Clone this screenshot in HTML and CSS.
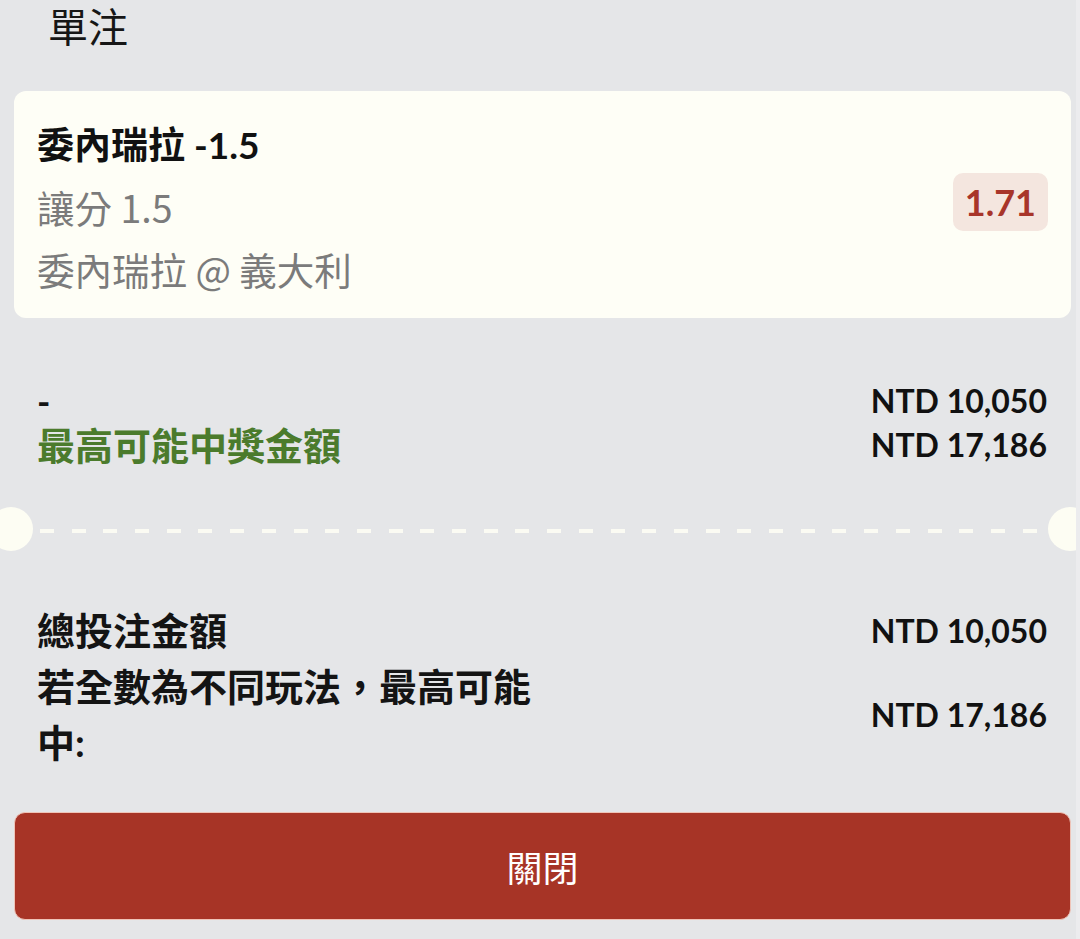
FILE: index.html
```html
<!DOCTYPE html>
<html lang="zh-Hant">
<head>
<meta charset="utf-8">
<title>單注</title>
<link rel="stylesheet" href="styles.css">
</head>
<body>
	<div class="screen">
		<main class="sheet">
			<h1 class="title">單注</h1>

			<section class="bet-card">
				<div class="bet-info">
					<div class="bet-pick">委內瑞拉 -1.5</div>
					<div class="bet-sub">讓分 1.5</div>
					<div class="bet-sub">委內瑞拉 @ 義大利</div>
				</div>
				<div class="odds">1.71</div>
			</section>

			<section class="summary">
				<div class="sum-row">
					<span class="sum-label">-</span>
					<span class="amount">NTD 10,050</span>
				</div>
				<div class="sum-row">
					<span class="sum-label win">最高可能中獎金額</span>
					<span class="amount">NTD 17,186</span>
				</div>
			</section>

			<div class="divider">
				<span class="notch"></span>
				<span class="dashes"></span>
				<span class="notch"></span>
			</div>

			<section class="totals">
				<div class="total-row">
					<span class="total-label">總投注金額</span>
					<span class="amount">NTD 10,050</span>
				</div>
				<div class="total-row">
					<span class="total-label">若全數為不同玩法，最高可能中:</span>
					<span class="amount">NTD 17,186</span>
				</div>
			</section>

			<button class="close-btn" type="button">關閉</button>
		</main>
		<div class="scrollbar"></div>
	</div>
</body>
</html>
```

FILE: styles.css
```css
*{
	margin: 0;
	padding: 0;
	box-sizing: border-box;
}

body{
	background-color: #e5e6e8;
	font-family: Lato, "Noto Sans CJK TC", sans-serif;
	color: #141414;
}

.screen{
	display: flex;
	width: 1080px;
	height: 939px;
	overflow: hidden;
}
.sheet{
	flex: 1;
	padding: 0 5px 0 14px;
	overflow: hidden;
}
.scrollbar{
	width: 4px;
	background-color: #ececee;
}

.title{
	padding: 0 0 0 34px;
	font-family: "Noto Sans CJK TC", sans-serif;
	font-size: 40px;
	font-weight: 400;
	line-height: 50px;
	color: #161616;
}

/* 注单卡片 */
.bet-card{
	margin-top: 41px;
	padding: 23px 23px 18px 23px;
	display: flex;
	align-items: center;
	background-color: #fefef6;
	border-radius: 12px;
}
.bet-info{
	flex: 1;
	font-size: 37px;
	line-height: 62px;
}
.bet-pick{
	font-weight: 700;
	color: #111;
}
.bet-sub{
	font-family: "Noto Sans CJK TC", sans-serif;
	font-size: 37.5px;
	color: #7b7b7b;
}
.odds{
	margin-bottom: 10px;
	padding: 0 12px;
	height: 58px;
	line-height: 58px;
	font-size: 36px;
	font-weight: 700;
	color: #a8352a;
	background-color: #f4e6df;
	border-radius: 10px;
}

/* 金额 */
.summary{
	margin-top: 61px;
	padding: 0 24px 0 23px;
}
.sum-row{
	display: flex;
	justify-content: space-between;
	align-items: center;
	line-height: 44px;
}
.sum-label{
	font-size: 36px;
	font-weight: 700;
}
.win{
	font-size: 38px;
	color: #4b7b2c;
}
.amount{
	font-size: 32px;
	font-weight: 700;
	color: #111;
	white-space: nowrap;
}

.divider{
	margin: 40px -21px 0 -25px;
	display: flex;
	align-items: center;
	height: 44px;
}
.notch{
	flex: 0 0 44px;
	height: 44px;
	border-radius: 50%;
	background-color: #fdfdf3;
}
.dashes{
	flex: 1;
	height: 4px;
	margin: 3px 7px 0 7px;
	background: repeating-linear-gradient(90deg, #fbfbf3 0, #fbfbf3 14px, transparent 14px, transparent 31.7px);
}

.totals{
	margin-top: 51px;
	padding: 0 24px 0 23px;
}
.total-row{
	display: flex;
	justify-content: space-between;
	align-items: center;
}
.total-label{
	width: 510px;
	font-size: 38px;
	font-weight: 700;
	line-height: 56px;
}

.close-btn{
	display: block;
	width: 100%;
	height: 108px;
	margin-top: 42px;
	border: 1px solid #efc4b8;
	border-radius: 11px;
	background-color: #a73426;
	color: #fff;
	font-family: "Noto Sans CJK TC", sans-serif;
	font-size: 36px;
	cursor: pointer;
}
```
